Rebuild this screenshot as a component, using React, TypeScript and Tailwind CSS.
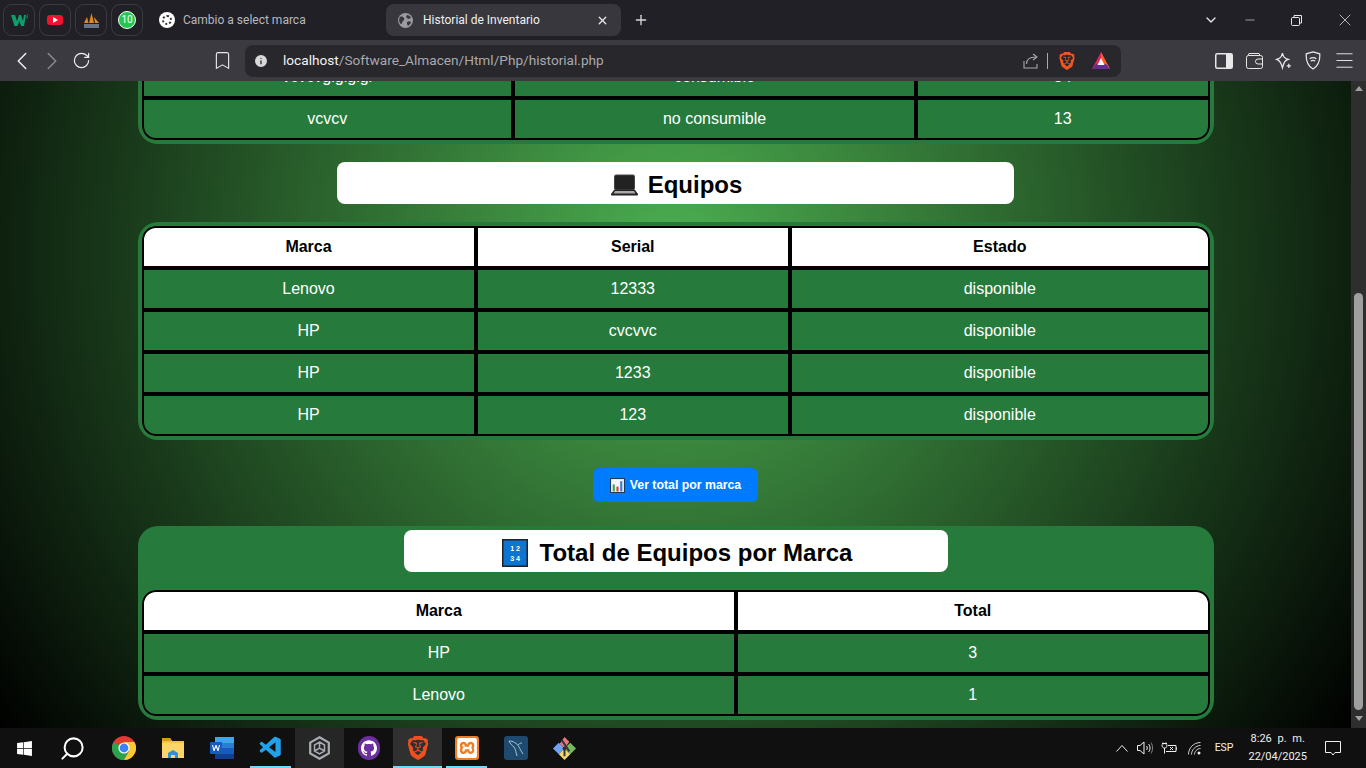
import { Bookmark, ChevronDown, ChevronLeft, ChevronRight, Info, Menu, Minus, Plus, RotateCw, Search, X } from "lucide-react";
import { FaWindows } from "react-icons/fa";
import { SiBrave, SiGithub, SiXampp } from "react-icons/si";
import { VscVscode } from "react-icons/vsc";

const uiFont = "[font-family:'Roboto','Noto_Sans',sans-serif]";

function ChromeIcon({ size = 24 }: { size?: number }) {
  return (
    <svg width={size} height={size} viewBox="0 0 24 24">
      <circle cx="12" cy="12" r="12" fill="#e33b2e" />
      <path d="M12 12 1.600 6A12 12 0 0 0 12 24l5.200-9z" fill="#2ba24c" />
      <path d="M12 6h10.400A12 12 0 0 1 12 24l5.200-9z" fill="#fcc934" />
      <circle cx="12" cy="12" r="5.600" fill="#fff" />
      <circle cx="12" cy="12" r="4.400" fill="#3b82f6" />
    </svg>
  );
}

function FolderIcon() {
  return (
    <svg width="22" height="22" viewBox="0 0 22 22">
      <path d="M0 1h8l2 3h12v17H0z" fill="#f4c542" />
      <path d="M0 1h8l2 3H0z" fill="#d99a1c" />
      <path d="M0 6h22v15H0z" fill="#fbd568" />
      <path d="M6 21v-5l5-3 5 3v5h-3v-3H9v3z" fill="#2f8fd8" />
    </svg>
  );
}

function WordIcon() {
  return (
    <svg width="24" height="22" viewBox="0 0 24 22">
      <rect x="5" y="0" width="19" height="22" rx="1" fill="#2b7cd3" />
      <rect x="5" y="0" width="19" height="6" fill="#41a5ee" />
      <rect x="5" y="11" width="19" height="6" fill="#185abd" />
      <rect x="5" y="17" width="19" height="5" fill="#103f91" />
      <rect x="0" y="5" width="12" height="12" rx="1" fill="#185abd" />
      <path d="m2 8 1.500 6h1L6 10l1.500 4h1L10 8H9l-1 4-1.500-4h-1L4 12 3 8z" fill="#fff" />
    </svg>
  );
}

function HexCubeIcon() {
  return (
    <svg width="21" height="24" viewBox="0 0 21 24" fill="none" stroke="#a9adb2" strokeWidth="2.200">
      <path d="M10.500 1.300 19.800 6.600v10.800l-9.300 5.300-9.300-5.300V6.600z" />
      <path d="M10.500 6 15.500 9v6l-5 3-5-3V9zM10.500 6v6M5.500 15l5-3 5 3" strokeWidth="1.500" />
    </svg>
  );
}

function MysqlIcon() {
  return (
    <span className="flex h-6 w-6 items-center justify-center rounded-[3px] bg-[#1d4a6e]">
      <svg width="20" height="20" viewBox="0 0 20 20" fill="none" stroke="#b8cfe0" strokeWidth="0.900">
        <path d="M3 3c4 0 8 2 10 6 1 2 2 4 4 7M3 3c1 3 3 4 5 6 2 3 2 6 3 9M12 7c1-1 2-2 4-2" />
      </svg>
    </span>
  );
}

function GitClientIcon() {
  return (
    <svg width="25" height="25" viewBox="0 0 26 26">
      <path d="m13 13-6-6-6 6 6 6z" fill="#6ea2f2" />
      <path d="m13 13 6-6 6 6-6 6z" fill="#76bb5a" />
      <path d="m13 13-6 6 6 6 6-6z" fill="#f1d774" />
      <path d="m13 13-5-5 5-7 5 5z" fill="#e8787d" />
      <path d="M10 4 18 16M13 13v8" stroke="#333" strokeWidth="2" />
      <circle cx="13" cy="13" r="2" fill="#333" />
    </svg>
  );
}

function BatTriangle() {
  return (
    <svg width="18" height="17" viewBox="0 0 18 17">
      <path d="M9 0 18 17H0z" fill="#e0245e" />
      <path d="M9 0 18 17H9z" fill="#ff5a1f" />
      <path d="M0 17l4-5h10l4 5z" fill="#662d91" />
      <path d="M9 6 12.500 13h-7z" fill="#fff" />
    </svg>
  );
}

function LaptopEmoji() {
  return (
    <svg width="27" height="22" viewBox="0 0 27 22" className="mr-2.5">
      <rect x="3.500" y="1" width="20" height="15" rx="1.500" fill="#222" stroke="#444" />
      <path d="M3 16h21l3 4a1 1 0 0 1-1 1.500H1A1 1 0 0 1 0 20z" fill="#222" />
      <path d="M4 17h19l1.500 2.500h-22z" fill="#aaa" />
    </svg>
  );
}

function ChartEmoji() {
  return (
    <svg width="15" height="15" viewBox="0 0 14 14" className="mr-[5px]">
      <rect x="0.500" y="0.500" width="13" height="13" fill="#f3f6fa" stroke="#1f3a5f" />
      <rect x="2.500" y="6" width="2" height="6.500" fill="#3aa655" />
      <rect x="6" y="8" width="2" height="4.500" fill="#d9412f" />
      <rect x="9.500" y="3" width="2" height="9.500" fill="#3a7bd5" />
    </svg>
  );
}

function NumbersEmoji() {
  return (
    <svg width="26" height="28" viewBox="0 0 26 28" className="mr-3">
      <rect x="0.750" y="0.750" width="24.500" height="26.500" fill="#0d74d1" stroke="#222" strokeWidth="1.500" />
      <text x="13" y="12" textAnchor="middle" fontSize="7" fill="#fff" fontFamily="Liberation Sans, sans-serif">1 2</text>
      <text x="13" y="22" textAnchor="middle" fontSize="7" fill="#fff" fontFamily="Liberation Sans, sans-serif">3 4</text>
    </svg>
  );
}

function TabBar() {
  const pinned = [
    <svg key="w" width="17" height="13" viewBox="0 0 17 13"><path d="M0 1h4l2 6 2-6h2l2 6 1-6h2l-2 11h-3L8.500 7 6.500 12h-3z" fill="#0f9d6b" /><path d="M15 0h2v2h-1v1h1v1h-2" fill="none" stroke="#0f9d6b" strokeWidth="0.600" /></svg>,
    <span key="y" className="flex h-2.5 w-4 items-center justify-center rounded-[3px] bg-[#f0132e]"><span className="h-0 w-0 border-y-[3px] border-l-[5px] border-y-transparent border-l-white" /></span>,
    <svg key="p" width="17" height="17" viewBox="0 0 17 17"><path d="m1 11 3-6 1.500 6zM6 11l2.500-10L11 11zM12 11l-1-6 5 6z" fill="#e08a1e" /><rect x="1" y="12" width="15" height="4" fill="#6a7488" /></svg>,
    <span key="n" className="flex h-[18px] w-[18px] items-center justify-center rounded-full border border-white bg-[#25c552] text-[10px] leading-none text-white">10</span>,
  ];
  return (
    <div className={`flex h-10 shrink-0 items-center bg-[#202026] pl-[3px] ${uiFont}`}>
      <div className="flex gap-1">
        {pinned.map((icon, i) => (
          <div key={i} className="flex h-8 w-8 items-center justify-center rounded-[9px] border border-[#3a3a40]">{icon}</div>
        ))}
      </div>
      <div className="ml-[7px] flex h-8 w-[236px] items-center gap-2 pl-[9px] text-xs text-[#b9b9be]">
        <span className="flex h-4 w-4 items-center justify-center rounded-full bg-white"><span className="h-2.5 w-2.5 rounded-full border-2 border-dotted border-[#333]" /></span>
        Cambio a select marca
      </div>
      <div className="flex h-8 w-[235px] items-center rounded-lg bg-[#37373d] pl-[12px] pr-[12px] text-xs text-[#f0f0f0]">
        <svg width="15" height="15" viewBox="0 0 15 15" className="mr-[10px]">
          <circle cx="7.500" cy="7.500" r="7.500" fill="#9a9aa0" />
          <path d="M2 4c2-1 3 0 4 1s0 2-1 3-1 3-2 3-3-4-1-7zM9 2c2 0 4 2 4 3l-3 1-2-2zM9 9l3-1 1 2-3 3-1-2z" fill="#37373d" />
        </svg>
        Historial de Inventario
        <X size={13} strokeWidth={2.5} className="ml-auto text-[#e5e5e5]" />
      </div>
      <Plus size={16} className="ml-3 text-[#d8d8d8]" />
      <ChevronDown size={16} strokeWidth={2} className="ml-auto mr-[24px] text-[#e8e8e8]" />
      <Minus size={14} strokeWidth={1} className="mr-[34px] text-white" />
      <svg width="11" height="11" viewBox="0 0 11 11" fill="none" stroke="#e8e8e8" className="mr-[33px]"><rect x="0.500" y="2.500" width="8" height="8" rx="1" /><path d="M3 2.500V.500h7.500V8H8.500" /></svg>
      <X size={20} strokeWidth={0.8} className="mr-[11px] text-white" />
    </div>
  );
}

function Toolbar() {
  return (
    <div className={`flex h-[41px] shrink-0 items-center bg-[#3a3a40] ${uiFont}`}>
      <ChevronLeft size={30} strokeWidth={1.2} className="ml-[7px] text-[#f0f0f0]" />
      <ChevronRight size={30} strokeWidth={1.2} className="text-[#8a8a8f]" />
      <RotateCw size={19} strokeWidth={1.5} className="ml-[5px] text-[#f0f0f0]" />
      <Bookmark size={21} strokeWidth={1.3} className="ml-[121px] text-[#e8e8e8]" />
      <div className="ml-[12px] flex h-8 w-[876px] items-center rounded-lg bg-[#27272c] pl-[8px] pr-[11px] text-[13.65px]">
        <Info size={16} fill="#d8d8d8" stroke="#27272c" strokeWidth={2} />
        <span className="ml-[14px] text-[#f2f2f2]">localhost</span>
        <span className="text-[#a9a9ae]">/Software_Almacen/Html/Php/historial.php</span>
        <svg width="16" height="16" viewBox="0 0 16 16" fill="none" stroke="#a9a9ae" strokeWidth="1.100" className="ml-auto">
          <path d="M1 8v7h13V11M3.500 11c0-5 3.500-7 9-7M10 1l4 3-4 3" />
        </svg>
        <span className="ml-[8px] mr-[10px] h-[16px] w-px bg-[#a9a9ae]" />
        <SiBrave size={18} className="text-[#f0551e]" />
        <span className="ml-[16px]"><BatTriangle /></span>
      </div>
      <svg width="18" height="16" viewBox="0 0 18 16" className="ml-[94px]"><rect x="0.750" y="0.750" width="16.500" height="14.500" rx="1.500" fill="none" stroke="#e8e8e8" strokeWidth="1.500" /><rect x="11" y="1" width="6" height="14" fill="#e8e8e8" /></svg>
      <svg width="17" height="16" viewBox="0 0 17 16" fill="none" stroke="#e8e8e8" className="ml-[13px]"><rect x="0.500" y="2.500" width="16" height="13" rx="2" /><path d="M2 2.500 3 .5h10l1 2M16.500 6H12a2 2 0 0 0 0 5h4.500z" /></svg>
      <svg width="17" height="18" viewBox="0 0 16 17" fill="none" stroke="#e8e8e8" strokeWidth="1.200" className="ml-[12px]"><path d="M7 1c1 4 2 5 5.500 6C9 8 8.500 10 7 15c-1-4-2-7-5.500-8C5 6 6 5 7 1z" /><path d="M13 11v4M11 13h4" /></svg>
      <svg width="16" height="19" viewBox="0 0 14 17" fill="none" stroke="#e8e8e8" strokeWidth="1.100" className="ml-[13px]"><path d="M7 .8 13 2.500c.5 6-1 10.500-6 13.700C2 13 .5 8.500 1 2.500z" /><path d="M4 7c2-1.500 4-1.500 6 0M5 9c1.200-.8 2.800-.8 4 0" /></svg>
      <Menu size={23} strokeWidth={1} className="ml-[12px] text-[#e8e8e8]" />
    </div>
  );
}

type TableProps = { headers?: string[]; rows: string[][]; widths: string[] };

// celdas con borde de 2px: entre dos celdas queda una linea de 4px
function DataTable({ headers, rows, widths }: TableProps) {
  const cell = "border-2 border-black px-2.5 py-2.5 text-center leading-[18px]";
  return (
    <div className="overflow-hidden rounded-[14px]">
      <table className="w-full table-fixed border-separate border-spacing-0 rounded-[14px] text-base">
        <colgroup>
          {widths.map((w, i) => <col key={i} className={w} />)}
        </colgroup>
        {headers && (
          <thead>
            <tr>
              {headers.map((h, i) => (
                <th key={h} className={`${cell} bg-white font-bold text-black ${i === 0 ? "rounded-tl-[14px]" : ""} ${i === headers.length - 1 ? "rounded-tr-[14px]" : ""}`}>{h}</th>
              ))}
            </tr>
          </thead>
        )}
        <tbody>
          {rows.map((r, ri) => (
            <tr key={ri}>
              {r.map((c, ci) => (
                <td key={ci} className={`${cell} bg-[#267a3b] text-white ${ri === rows.length - 1 && ci === 0 ? "rounded-bl-[14px]" : ""} ${ri === rows.length - 1 && ci === r.length - 1 ? "rounded-br-[14px]" : ""}`}>{c}</td>
              ))}
            </tr>
          ))}
        </tbody>
      </table>
    </div>
  );
}

function Page() {
  return (
    <div className="flex min-h-0 flex-1">
      <div className="flex min-w-0 flex-1 flex-col items-center justify-end overflow-hidden bg-black bg-[radial-gradient(circle_at_675px_170px,#4caf50_0%,#000_100%)] pb-2 [font-family:'Liberation_Sans',sans-serif]">
        <div className="w-[1076px] shrink-0 rounded-[20px] bg-[#267a3b] p-1">
          <DataTable
            widths={["w-[371.5px]", "w-[403px]", "w-auto"]}
            rows={[["vcvcvgigigigi", "consumible", "54"], ["vcvcv", "no consumible", "13"]]}
          />
        </div>
        <h2 className="mt-[18px] flex h-[42px] w-[677px] shrink-0 items-center justify-center rounded-lg bg-white pl-[2px] pt-1 text-2xl font-bold text-black">
          <LaptopEmoji />Equipos
        </h2>
        <div className="mt-[18px] w-[1076px] shrink-0 rounded-[20px] bg-[#267a3b] p-1">
          <DataTable
            widths={["w-[334px]", "w-[314.5px]", "w-auto"]}
            headers={["Marca", "Serial", "Estado"]}
            rows={[["Lenovo", "12333", "disponible"], ["HP", "cvcvvc", "disponible"], ["HP", "1233", "disponible"], ["HP", "123", "disponible"]]}
          />
        </div>
        <button className="mt-7 flex h-[34px] w-[165px] shrink-0 items-center justify-center rounded-md bg-[#007bff] text-[12.3px] font-bold text-white">
          <ChartEmoji />Ver total por marca
        </button>
        <div className="mt-6 flex w-[1076px] shrink-0 flex-col items-center rounded-[20px] bg-[#267a3b] p-1">
          <h2 className="flex h-[42px] w-[544px] items-center justify-center rounded-lg bg-white pl-[3px] pt-1 text-2xl font-bold text-black">
            <NumbersEmoji />Total de Equipos por Marca
          </h2>
          <div className="mt-[18px] w-full">
            <DataTable
              widths={["w-[594.5px]", "w-auto"]}
              headers={["Marca", "Total"]}
              rows={[["HP", "3"], ["Lenovo", "1"]]}
            />
          </div>
        </div>
      </div>
      {/* barra de scroll */}
      <div className="flex w-[15px] shrink-0 flex-col items-center bg-[#2e2e2e] pt-[5px] pb-[7px]">
        <span className="h-0 w-0 border-x-[4px] border-b-[5px] border-x-transparent border-b-[#a0a0a0]" />
        <div className="mt-[202px] w-[9px] flex-1 rounded-full bg-[#9f9f9f]" />
        <span className="mt-[6px] h-0 w-0 border-x-[4px] border-t-[5px] border-x-transparent border-t-[#a0a0a0]" />
      </div>
    </div>
  );
}

function Taskbar() {
  const apps = [
    { icon: <ChromeIcon /> },
    { icon: <FolderIcon /> },
    { icon: <WordIcon /> },
    { icon: <VscVscode size={26} className="text-[#22a0e8]" />, line: "inset-x-1" },
    { icon: <HexCubeIcon />, bg: "bg-[#262626]" },
    { icon: <span className="flex h-6 w-[22px] items-center justify-center rounded-full bg-[#6b2fa0]"><SiGithub size={16} className="text-white" /></span> },
    { icon: <SiBrave size={24} className="text-[#f0501e]" />, bg: "bg-[#303030]", line: "inset-x-0" },
    { icon: <span className="flex h-6 w-6 items-center justify-center rounded-[3px] bg-[#f07d22]"><SiXampp size={20} className="text-white" /></span>, line: "inset-x-1" },
    { icon: <MysqlIcon /> },
    { icon: <GitClientIcon /> },
  ];
  return (
    <div className={`flex h-10 shrink-0 items-stretch bg-[#101010] text-white ${uiFont}`}>
      <div className="flex w-12 items-center justify-center"><FaWindows size={17} /></div>
      <div className="flex w-12 items-center justify-center"><Search size={27} strokeWidth={1.8} className="scale-x-[-1]" /></div>
      <div className="ml-[3px] flex">
        {apps.map((a, i) => (
          <div key={i} className={`relative flex w-[49px] items-center justify-center ${a.bg ?? ""}`}>
            {a.icon}
            {a.line && <span className={`absolute bottom-0 h-0.5 bg-[#76d6f5] ${a.line}`} />}
          </div>
        ))}
      </div>
      <div className="ml-auto flex items-center pr-[18px] text-[#f0f0f0]">
        <svg width="12" height="7" viewBox="0 0 12 7" fill="none" stroke="#f0f0f0"><path d="m.5 6.500 5.500-6 5.500 6" /></svg>
        <svg width="16" height="14" viewBox="0 0 16 14" fill="none" stroke="#f0f0f0" className="ml-[9px]">
          <path d="M.5 4.500h2.500L7 1v12L3 9.500H.5zM9.500 5c1 1 1 3 0 4M11.500 3c2 2 2 6 0 8" />
          <path d="M14 1.500c2 3 2 8 0 11" stroke="#888" />
        </svg>
        <svg width="16" height="12" viewBox="0 0 16 12" fill="none" stroke="#f0f0f0" className="ml-2">
          <path d="M1 1.500h5M2 .5v2M5 .5v2M1 2.500c0 3 1 3.500 2.500 3.500S6 5.500 6 2.500M3.500 6v5.500" />
          <path d="M7 3.500h8v6H5M15.500 5.500v2" />
          <path d="m9 5 3 3M12 5 9 8" />
        </svg>
        <svg width="13" height="13" viewBox="0 0 13 13" fill="none" stroke="#d0d0d0" className="ml-[11px]">
          <path d="M.5 12.500c0-6.500 5-12 12-12M3.500 12.500c0-4.500 4-9 9-9M6.500 12.500c0-3 2.500-6 6-6" />
          <circle cx="11" cy="11" r="1.500" fill="#f0f0f0" stroke="none" />
        </svg>
        <span className="ml-[14px] text-[10.5px]">ESP</span>
        <div className="ml-[15px] flex flex-col items-center text-[11px] leading-[18px]">
          <span className="[word-spacing:3px]">8:26 p. m.</span>
          <span>22/04/2025</span>
        </div>
      </div>
      <div className="flex items-center pr-[25px]">
        <svg width="16" height="15" viewBox="0 0 16 15" fill="none" stroke="#f0f0f0"><path d="M.5.500h15v11H10l-2 2.500-2-2.500H.5z" /></svg>
      </div>
    </div>
  );
}

export default function App() {
  return (
    <div className="flex h-screen w-full flex-col overflow-hidden bg-black">
      <TabBar />
      <Toolbar />
      <Page />
      <Taskbar />
    </div>
  );
}
